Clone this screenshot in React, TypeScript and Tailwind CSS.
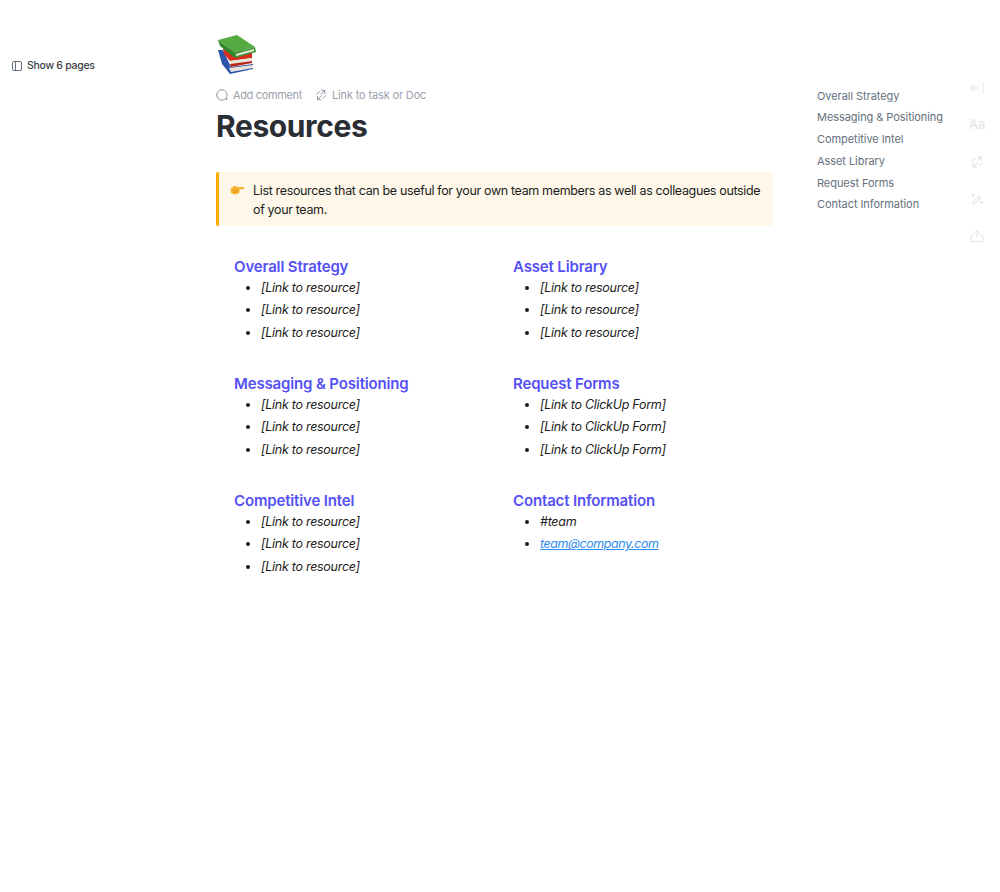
import React from "react";

const TOC = [
  "Overall Strategy",
  "Messaging & Positioning",
  "Competitive Intel",
  "Asset Library",
  "Request Forms",
  "Contact Information",
];

const SECTIONS: { title: string; items: React.ReactNode[] }[] = [
  { title: "Overall Strategy", items: ["[Link to resource]", "[Link to resource]", "[Link to resource]"] },
  { title: "Asset Library", items: ["[Link to resource]", "[Link to resource]", "[Link to resource]"] },
  { title: "Messaging & Positioning", items: ["[Link to resource]", "[Link to resource]", "[Link to resource]"] },
  { title: "Request Forms", items: ["[Link to ClickUp Form]", "[Link to ClickUp Form]", "[Link to ClickUp Form]"] },
  { title: "Competitive Intel", items: ["[Link to resource]", "[Link to resource]", "[Link to resource]"] },
  {
    title: "Contact Information",
    items: [
      "#team",
      <a key="mail" href="#" className="tracking-[-0.45px] text-[#2f8cf0] underline">
        team@company.com
      </a>,
    ],
  },
];

function BooksEmoji() {
  return (
    <svg width="42" height="42" viewBox="0 0 42 42" className="block">
      {/* blue book */}
      <path d="M2 16 L7 16 L15 33 L37 30 L37 35 L14 40 L6 30 Z" fill="#2f55a8" />
      <path d="M13 34 L37 31 L37 34 L15 38 Z" fill="#e8e4da" />
      {/* red book */}
      <path d="M7 14 L36 18 L36 24 L14 27 L8 20 Z" fill="#d8301f" />
      <path d="M14 27 L36 24 L36 27 L14 30 Z" fill="#ece7dc" />
      <path d="M14 30 L36 27 L36 29 L15 33 Z" fill="#b8281b" />
      {/* green book */}
      <path d="M2 6 L21 1 L39 13 L19 19 Z" fill="#55ab42" />
      <path d="M2 6 L19 19 L19 24 L4 12 Z" fill="#2f8a2e" />
      <path d="M19 19 L39 13 L40 18 L19 24 Z" fill="#3b9436" />
      <path d="M20 20 L38 15 L38 17 L20 22 Z" fill="#efeadf" />
    </svg>
  );
}

function HandEmoji() {
  return (
    <svg width="15" height="10" viewBox="0 0 16 11" className="block">
      <path
        d="M0.5 3.5 L4 1.5 C5 1 6 1.2 7 1.8 L15 2.6 C16 2.8 16 4.4 15 4.6 L10 4.8 C10.6 6 10.4 8.4 9 9.4 C7 10.6 3 10.4 1.5 9 L0.5 8.6 Z"
        fill="#f5b32e"
      />
      <path d="M3 6 L9 5.6 M3.5 8 L8.6 7.6" stroke="#d68a14" strokeWidth="0.8" fill="none" />
    </svg>
  );
}

function LinkIcon({ className }: { className: string }) {
  return (
    <svg viewBox="0 0 16 16" fill="none" stroke="currentColor" strokeWidth="1.3" strokeLinecap="round" strokeLinejoin="round" className={className}>
      <path d="M9 1.5 L13 2 L13 6 M13 2 L8 7" />
      <path d="M7.5 14.5 L3.5 14 L3.5 10 M3.5 14 L8.5 9" />
      <path d="M2.5 7 L6 3.5 M10.5 12.5 L14 9" />
    </svg>
  );
}

function WandIcon({ className }: { className: string }) {
  return (
    <svg viewBox="0 0 16 16" fill="none" stroke="currentColor" strokeWidth="1.2" strokeLinecap="round" strokeLinejoin="round" className={className}>
      <path d="M3 12.2 L10.6 4.6 L12.4 6.4 L4.8 14 Z" />
      <path d="M9.2 6 L11 7.8" />
      <path d="M3.5 2 V5 M2 3.5 H5 M13.5 10.5 V13.5 M12 12 H15" />
    </svg>
  );
}

export default function App() {
  return (
    <div className="relative flex h-[892px] w-[1000px] bg-white font-['Inter',sans-serif] text-[#1b1d21]">
      {/* Left pages toggle */}
      <div className="w-[216px] shrink-0 pl-3 pt-[59px]">
        <div className="flex items-center gap-[5px] text-[10.5px] leading-[14px] font-medium tracking-[-0.28px] text-[#3a3f47]">
          <svg width="10" height="10" viewBox="0 0 10 10" fill="none" stroke="#656f7d" strokeWidth="1" className="shrink-0">
            <rect x="0.5" y="0.5" width="9" height="9" rx="1.5" />
            <path d="M3.5 0.5 V9.5" />
          </svg>
          <span>Show 6 pages</span>
        </div>
      </div>

      {/* Page body */}
      <main className="w-[557px] shrink-0 pt-[34px]">
        <BooksEmoji />
        <div className="mt-[12px] flex items-center text-[11px] leading-[14px] tracking-[-0.15px] text-[#9aa1ad]">
          <svg width="12" height="12" viewBox="0 0 12 12" fill="none" stroke="#87909e" strokeWidth="1">
            <path d="M6 0.8 A5.2 5.2 0 1 0 9.6 9.7 L11 10.8 L10.4 8.6 A5.2 5.2 0 0 0 6 0.8 Z" />
          </svg>
          <span className="ml-[5px] tracking-[-0.35px]">Add comment</span>
          <LinkIcon className="ml-[13px] h-3 w-3 text-[#87909e]" />
          <span className="ml-[5px]">Link to task or Doc</span>
        </div>
        <h1 className="mt-[4px] text-[30px] leading-[40px] font-bold tracking-[-0.4px] text-[#2a2e34]">Resources</h1>

        <div className="mt-[26px] flex rounded-[2px] border-l-[3px] border-[#ffab00] bg-[#fff8ea] pt-[9px] pr-[8px] pb-[7px] pl-[11px] text-[12.5px] leading-[19px] tracking-[-0.35px]">
          <div className="mt-[4px] w-[23px] shrink-0">
            <HandEmoji />
          </div>
          <p>List resources that can be useful for your own team members as well as colleagues outside of your team.</p>
        </div>

        <div className="mt-[30px] grid grid-cols-[279px_1fr] gap-y-[27px] pl-[18px]">
          {SECTIONS.map((s) => (
            <section key={s.title} className="h-[90px]">
              <h2 className="text-[15px] leading-[21px] font-semibold tracking-[-0.15px] text-[#5450f5]">{s.title}</h2>
              <ul className="list-disc pl-[27px] text-[12.5px] leading-[22.4px] tracking-[-0.28px] italic">
                {s.items.map((item, i) => (
                  <li key={i}>{item}</li>
                ))}
              </ul>
            </section>
          ))}
        </div>
      </main>

      {/* Table of contents */}
      <nav className="ml-[44px] flex flex-col gap-[4px] pt-[87.5px] text-[11px] leading-[17.8px] font-normal tracking-[-0.06px] text-[#656f7d]">
        {TOC.map((t) => (
          <a key={t} href="#">
            {t}
          </a>
        ))}
      </nav>

      {/* Right rail */}
      <div className="absolute top-[81px] right-[16px] flex w-[14px] flex-col items-center text-[#e4e6ea]">
        <svg width="14" height="14" viewBox="0 0 14 14" fill="none" stroke="currentColor" strokeWidth="1.1" strokeLinecap="round" strokeLinejoin="round">
          <path d="M1 7 H9.5 M3.5 4.5 L1 7 L3.5 9.5 M13 2 V12" />
        </svg>
        <span className="mt-[21px] text-[13px] leading-[16px] font-medium whitespace-nowrap">Aa</span>
        <LinkIcon className="mt-[23px] h-[14px] w-[14px]" />
        <WandIcon className="mt-[23px] h-[14px] w-[14px]" />
        <svg width="14" height="14" viewBox="0 0 14 14" fill="none" stroke="currentColor" strokeWidth="1.1" strokeLinecap="round" strokeLinejoin="round" className="mt-[23px]">
          <path d="M7 9 V1.5 M4.5 3.8 L7 1.5 L9.5 3.8 M4 6 H2.5 A1.5 1.5 0 0 0 1 7.5 V11 A1.5 1.5 0 0 0 2.5 12.5 H11.5 A1.5 1.5 0 0 0 13 11 V7.5 A1.5 1.5 0 0 0 11.5 6 H10" />
        </svg>
      </div>
    </div>
  );
}
